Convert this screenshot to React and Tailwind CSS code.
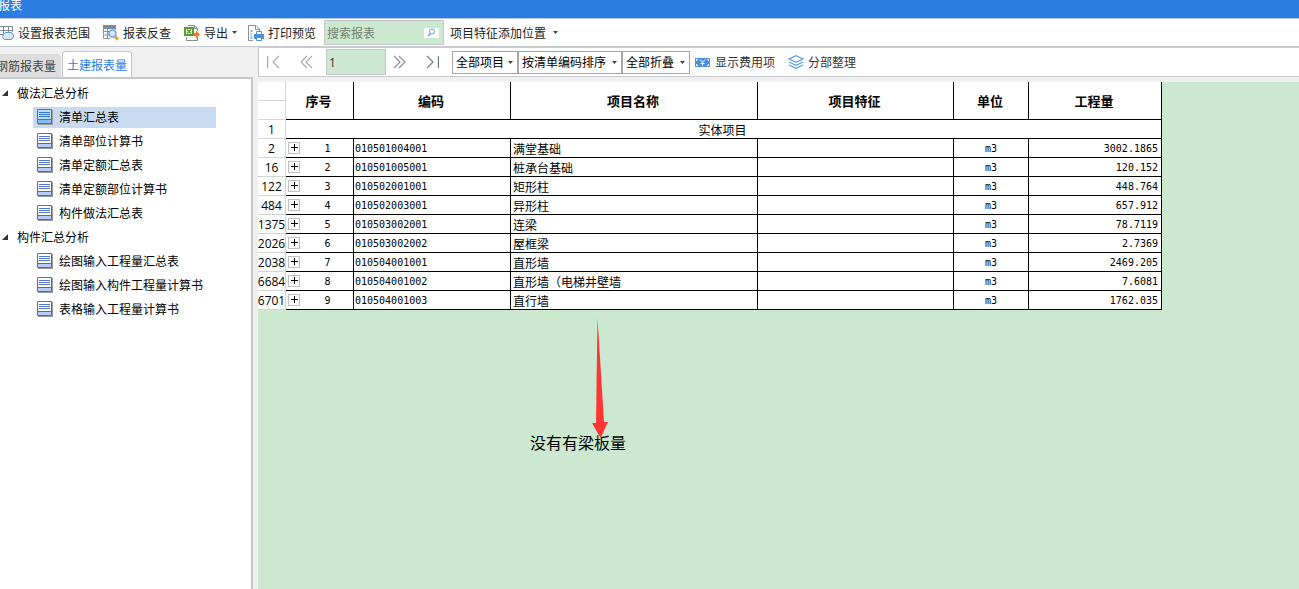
import { useState } from "react";

const menuGroups = [
    {
        title: "做法汇总分析",
        items: ["清单汇总表", "清单部位计算书", "清单定额汇总表", "清单定额部位计算书", "构件做法汇总表"],
    },
    {
        title: "构件汇总分析",
        items: ["绘图输入工程量汇总表", "绘图输入构件工程量计算书", "表格输入工程量计算书"],
    },
];

const rows = [
    { line: 2, code: "010501004001", name: "满堂基础", amount: "3002.1865" },
    { line: 16, code: "010501005001", name: "桩承台基础", amount: "120.152" },
    { line: 122, code: "010502001001", name: "矩形柱", amount: "448.764" },
    { line: 484, code: "010502003001", name: "异形柱", amount: "657.912" },
    { line: 1375, code: "010503002001", name: "连梁", amount: "78.7119" },
    { line: 2026, code: "010503002002", name: "屋框梁", amount: "2.7369" },
    { line: 2038, code: "010504001001", name: "直形墙", amount: "2469.205" },
    { line: 6684, code: "010504001002", name: "直形墙（电梯井壁墙", amount: "7.6081" },
    { line: 6701, code: "010504001003", name: "直行墙", amount: "1762.035" },
];

const Caret = () => (
    <svg width="5" height="3" viewBox="0 0 5 3" className="shrink-0" aria-hidden="true">
        <path d="M0 0h5L2.5 3z" fill="#444" />
    </svg>
);

const RangeIcon = () => (
    <svg width="14" height="16" viewBox="0 0 14 16" fill="none" className="shrink-0" aria-hidden="true">
        <path d="M0 1.500h13M0 5.500h13M0 9.500h3M3.500 1v9M8.500 1v6M12.500 1v6" stroke="#7d8b99" />
        <path d="M5.500 7.500H11q2.500.5 2.500 3.500T11 14.500H5Q2.500 14 2.500 11.500t3-4z" fill="#d6e8fb" stroke="#5b95d8" />
    </svg>
);

const CheckIcon = () => (
    <svg width="16" height="16" viewBox="0 0 16 16" fill="none" className="shrink-0" aria-hidden="true">
        <path d="M.5 3v10.500H7M.5 6.500h6M.5 10h5M4.500 3v10M12.500 3v2" stroke="#8a949e" />
        <path d="M0 0h13v4H0z" fill="#7f8b96" />
        <circle cx="9.500" cy="8.500" r="3.500" fill="#d5e7fb" stroke="#6ca3e6" strokeWidth="1.500" />
        <path d="M12 11.500l3 3" stroke="#f09a2e" strokeWidth="3" />
    </svg>
);

const ExportIcon = () => (
    <svg width="16" height="16" viewBox="0 0 16 16" fill="none" className="shrink-0" aria-hidden="true">
        <path d="M2.500 12v3.500h11V12M4 .5h6.500l3 3V6M10.500.5v3h3" stroke="#7f8b96" />
        <path d="M1 3h8v7H1z" fill="#eef6e6" stroke="#5d9b35" strokeWidth="2" />
        <path d="M3 4.500l4 4M7 4.500l-4 4" stroke="#5d9b35" strokeWidth="1.500" />
        <path d="M10 8h2V5.500l4 4-4 4V11h-2z" fill="#f07a28" />
    </svg>
);

const PrintIcon = () => (
    <svg width="16" height="16" viewBox="0 0 16 16" fill="none" className="shrink-0" aria-hidden="true">
        <path d="M5 15.500H.5V.5H8l3.500 3.500V6M7.500.5v4h4" stroke="#8592a0" />
        <path d="M2.500 6h2M2.500 8.500h1M2.500 11h1M2.500 13h2" stroke="#8592a0" strokeWidth="1.500" />
        <path d="M6 9h10v5H6z" fill="#4b8ee0" />
        <path d="M8.500 6.500h5v3h-5zM8.500 12.500h5v3h-5z" fill="#fff" stroke="#4b8ee0" />
    </svg>
);

const SearchIcon = () => (
    <svg width="9" height="9" viewBox="0 0 9 9" fill="none" aria-hidden="true">
        <circle cx="5" cy="3.500" r="2.500" stroke="#5c9fe0" />
        <path d="M3.500 5.500L1 8" stroke="#5c9fe0" strokeWidth="1.500" />
    </svg>
);

const FeeIcon = () => (
    <svg width="15" height="9" viewBox="0 0 15 9" fill="none" className="shrink-0" aria-hidden="true">
        <path d="M0 0h15v9H0z" fill="#4a90e2" />
        <path d="M5 1.500l2.500 3 2.500-3M7.500 4.500V8M5.500 5.500h4" stroke="#fff" />
        <path d="M1.500 3V1.500H3M1.500 6v1.500H3M13.500 3V1.500H12M13.500 6v1.500H12" stroke="#fff" />
    </svg>
);

const LayersIcon = () => (
    <svg width="16" height="14" viewBox="0 0 16 14" fill="none" stroke="#5b9be6" strokeWidth="1.200" className="shrink-0" aria-hidden="true">
        <path d="M8 .7l7 3.300-7 3.300L1 4z" />
        <path d="M1 7l7 3.300L15 7M1 10l7 3.300 7-3.300" />
    </svg>
);

const ReportIcon = ({ active }) => (
    <svg width="16" height="16" viewBox="0 0 16 16" fill="none" className="shrink-0" aria-hidden="true">
        <path d="M1 1h15v15H1z" fill="#9a9a9a" />
        <path d="M.5.5h14v14H.5z" fill={active ? "#b9dcfb" : "#fff"} stroke={active ? "#3478cc" : "#4a6cc8"} />
        <path d="M1 11h13v3H1z" fill={active ? "#86bbf8" : "#b8ccfb"} />
        <path d="M2 3.500h11M2 5.500h11M2 7.500h11" stroke={active ? "#3478cc" : "#5676cc"} />
        <path d="M1 10.500h13" stroke={active ? "#3478cc" : "#4a6cc8"} />
    </svg>
);

const PageButton = ({ label, d, className, color = "#aaa" }) => (
    <button type="button" aria-label={label} className={className}>
        <svg width="13" height="14" viewBox="0 0 13 14" fill="none" stroke={color} strokeWidth="1.200" aria-hidden="true">
            <path d={d} />
        </svg>
    </button>
);

const Dropdown = ({ label, value, className }) => (
    <div className={`relative ${className}`}>
        <select aria-label={label} className="block h-[23px] w-full appearance-none border border-[#a6a6a6] bg-white pl-[3px] text-black outline-none">
            <option>{value}</option>
        </select>
        <span className="pointer-events-none absolute top-[10px] right-[5px]">
            <Caret />
        </span>
    </div>
);

const Toolbar = () => (
    <div className="flex h-7 shrink-0 items-center border-b border-[#c8cacf] bg-white text-[#222]">
        <button type="button" className="flex items-center gap-1">
            <RangeIcon />
            设置报表范围
        </button>
        <button type="button" className="ml-[13px] flex items-center gap-1">
            <CheckIcon />
            报表反查
        </button>
        <button type="button" className="ml-[13px] flex items-center gap-1">
            <ExportIcon />
            导出
            <Caret />
        </button>
        <button type="button" className="ml-[11px] flex items-center gap-1">
            <PrintIcon />
            打印预览
        </button>
        {/* search */}
        <div className="ml-2 flex h-[25px] w-[120px] items-center border border-[#c2c8cb] bg-[#cce8cf] pr-1 pl-[2px]">
            <input aria-label="搜索报表" placeholder="搜索报表" className="w-full min-w-0 bg-transparent outline-none placeholder:text-[#71806f]" />
            <button type="button" aria-label="搜索" className="flex h-[10px] w-[15px] shrink-0 items-center justify-center bg-white">
                <SearchIcon />
            </button>
        </div>
        <button type="button" className="ml-[6px] flex items-center gap-[7px]">
            项目特征添加位置
            <Caret />
        </button>
    </div>
);

const Sidebar = ({ selected, onSelect }) => (
    <aside className="flex w-[253px] shrink-0 flex-col">
        {/* tabs */}
        <div className="flex h-[30px] items-end gap-[1px] overflow-hidden">
            <button type="button" className="-ml-1 h-[23px] rounded-tr-sm bg-[#dedede] pr-[5px] text-[#444]">钢筋报表量</button>
            <button type="button" className="h-[26px] rounded-t-sm border border-b-0 border-[#c3c7cc] bg-white px-1 text-[#2b7de1]">土建报表量</button>
        </div>
        {/* report tree */}
        <nav className="flex-1 border-t-2 border-r-2 border-[#c3c8cd] bg-white pt-[2px] text-black">
            {menuGroups.map((group) => (
                <div key={group.title}>
                    <button type="button" className="flex h-6 items-center gap-[9px] pl-[2px]">
                        <svg width="6" height="6" viewBox="0 0 6 6" aria-hidden="true">
                            <path d="M6 0v6H0z" fill="#333" />
                        </svg>
                        {group.title}
                    </button>
                    {group.items.map((item) => (
                        <div key={item} className="flex h-6 items-center pr-[35px] pl-[33px]">
                            <button
                                type="button"
                                onClick={() => onSelect(item)}
                                className={`flex h-[21px] w-full items-center gap-[6px] pl-1 whitespace-nowrap ${selected === item ? "bg-[#c9daf0]" : ""}`}
                            >
                                <ReportIcon active={selected === item} />
                                {item}
                            </button>
                        </div>
                    ))}
                </div>
            ))}
        </nav>
    </aside>
);

const ReportBar = () => (
    <div className="flex h-[30px] shrink-0 items-center border border-r-0 border-[#c8cacf] bg-white text-[#333]">
        <PageButton label="首页" className="ml-2" d="M.6 1v12M12 1L6 7l6 6" />
        <PageButton label="上一页" className="ml-5" d="M7 1L1 7l6 6M12 1L6 7l6 6" />
        <input aria-label="页码" defaultValue="1" className="ml-[13px] h-[26px] w-[60px] border border-[#c2c8cb] bg-[#cce8cf] pl-[2px] font-['Open_Sans'] outline-none" />
        <PageButton label="下一页" className="ml-[7px]" color="#8b9197" d="M1 1l6 6-6 6M6 1l6 6-6 6" />
        <PageButton label="末页" className="ml-5" color="#72808c" d="M1 1l6 6-6 6M12.400 1v12" />
        <Dropdown label="项目" value="全部项目" className="ml-[13px] w-[66px]" />
        <Dropdown label="排序" value="按清单编码排序" className="w-[104px]" />
        <Dropdown label="折叠" value="全部折叠" className="w-[68px]" />
        <button type="button" className="ml-[5px] flex items-center gap-[5px]">
            <FeeIcon />
            显示费用项
        </button>
        <button type="button" className="ml-[13px] flex items-center gap-1">
            <LayersIcon />
            分部整理
        </button>
    </div>
);

const ReportTable = () => (
    <table className="w-[904px] table-fixed border-separate border-spacing-0 bg-white text-black">
        <colgroup>
            <col className="w-[28px]" />
            <col className="w-[68px]" />
            <col className="w-[157px]" />
            <col className="w-[247px]" />
            <col className="w-[196px]" />
            <col className="w-[75px]" />
            <col className="w-[133px]" />
        </colgroup>
        <thead className="text-[13px]">
            <tr className="h-[19px]">
                <td className="border-r border-b border-[#d4d4d4]"></td>
                {["序号", "编码", "项目名称", "项目特征", "单位", "工程量"].map((head) => (
                    <th key={head} rowSpan={2} className="border-r border-b border-black p-0 pr-[2px] font-bold">{head}</th>
                ))}
            </tr>
            <tr className="h-[19px]">
                <td className="border-r border-b border-[#d4d4d4]"></td>
            </tr>
        </thead>
        <tbody className="leading-4">
            <tr className="h-[19px]">
                <td className="border-r border-b border-[#d4d4d4] p-0 pt-[2px] text-center font-['Open_Sans']">1</td>
                <td colSpan={6} className="border-r border-b border-black p-0 pt-[2px] pr-[2px] text-center">实体项目</td>
            </tr>
            {rows.map((row, index) => (
                <tr key={row.line} className="h-[19px]">
                    <td className="border-r border-b border-[#d4d4d4] p-0 pt-[2px] font-['Open_Sans']">
                        <div className="flex justify-center">{row.line}</div>
                    </td>
                    <td className="border-r border-b border-black p-0">
                        <div className="flex h-[18px] items-center pl-[2px]">
                            <button type="button" aria-label="展开" className="flex size-3 items-center justify-center border border-[#bfbfbf]">
                                <svg width="8" height="8" viewBox="0 0 8 8" stroke="#000" aria-hidden="true">
                                    <path d="M1 3.500h7M4.500 0v7" />
                                </svg>
                            </button>
                            <span className="flex-1 pt-[2px] pr-3 pl-[14px] text-center font-['DejaVu_Sans_Mono'] text-[10px]">{index + 1}</span>
                        </div>
                    </td>
                    <td className="border-r border-b border-black p-0 pt-[2px] pl-[1px] font-['DejaVu_Sans_Mono'] text-[10px]">{row.code}</td>
                    <td className="border-r border-b border-black p-0 pt-[2px] pl-[2px]">{row.name}</td>
                    <td className="border-r border-b border-black p-0"></td>
                    <td className="border-r border-b border-black p-0 pt-[2px] text-center font-['DejaVu_Sans_Mono'] text-[10px]">m3</td>
                    <td className="border-r border-b border-black p-0 pt-[2px] pr-[3px] text-right font-['DejaVu_Sans_Mono'] text-[10px]">{row.amount}</td>
                </tr>
            ))}
        </tbody>
    </table>
);

const App = () => {
    const [selected, setSelected] = useState("清单汇总表");

    return (
        <div className="flex h-screen flex-col overflow-hidden bg-[#f0f0f0] font-['Noto_Sans_CJK_SC',sans-serif] text-[12px] leading-4">
            {/* title */}
            <header className="h-[19px] shrink-0 border-b border-[#b9c7dc] bg-[#2b7de1] text-white">
                <h1 className="-ml-[2px] leading-[9px]">报表</h1>
            </header>
            <Toolbar />
            <div className="flex min-h-0 flex-1">
                <Sidebar selected={selected} onSelect={setSelected} />
                <main className="ml-[5px] flex min-w-0 flex-1 flex-col">
                    <ReportBar />
                    <div className="relative mt-[5px] flex-1 bg-[#cce8cf]">
                        <ReportTable />
                        {/* note pinned on the sheet */}
                        <div className="absolute top-[236px] left-[272px] w-24 text-black">
                            <p className="pt-[112px] text-[16px] leading-6 whitespace-nowrap">没有有梁板量</p>
                            <svg width="16" height="120" viewBox="0 0 16 120" className="absolute top-0 left-[62px]" aria-hidden="true">
                                <path d="M5.500 0L12 104h4L8.500 120 0 105h4z" fill="#fc3535" />
                            </svg>
                        </div>
                    </div>
                </main>
            </div>
        </div>
    );
};

export default App;
